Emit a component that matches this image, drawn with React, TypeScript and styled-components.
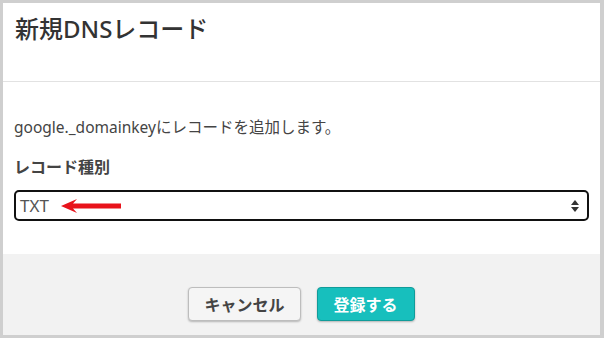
import React from "react"
import styled, { createGlobalStyle } from "styled-components"

const GlobalStyle = createGlobalStyle`
    html, body {
        margin: 0;
        padding: 0;
        background: #cfcfcf;
    }
    body {
        font-family: "Noto Sans", "Noto Sans CJK JP", sans-serif;
    }
`

const Frame = styled.div`
    width: 604px;
    height: 338px;
    box-sizing: border-box;
    border-style: solid;
    border-color: #cfcfcf;
    border-width: 3px 4px 3px 3px;
    background: #ffffff;
    display: flex;
    flex-direction: column;
`

const Header = styled.div`
    height: 79px;
    padding: 10px 12px 0;
    box-sizing: border-box;
    border-bottom: 1px solid #e2e2e2;
`

const Title = styled.h1`
    margin: 0;
    font-size: 24px;
    font-weight: 500;
    line-height: 32px;
    color: #333;
`

const Body = styled.div`
    padding: 34px 11px 0;
    height: 172px;
    box-sizing: border-box;
`

const Lead = styled.p`
    margin: 0;
    font-size: 15.5px;
    line-height: 22px;
    color: #444;
`

const Label = styled.label`
    display: block;
    margin-top: 18px;
    font-size: 16px;
    font-weight: 700;
    line-height: 22px;
    color: #444;
`

const SelectBox = styled.div`
    margin-top: 12px;
    height: 31px;
    box-sizing: border-box;
    border: 2px solid #111;
    border-radius: 5px;
    display: flex;
    align-items: center;
    padding: 0 8px 0 4px;
    gap: 12px;
`

const SelectValue = styled.span`
    font-size: 17px;
    color: #555;
`

const Arrow = styled.svg`
    width: 60px;
    height: 14px;
`

const Spinner = styled.svg`
    margin-left: auto;
    width: 8px;
    height: 12px;
`

const Footer = styled.div`
    flex: 1;
    background: #f2f2f2;
    display: flex;
    justify-content: center;
    align-items: flex-start;
    padding-top: 33px;
    gap: 16px;
`

const Button = styled.button<{ $primary?: boolean }>`
    height: 34px;
    padding: 0 ${p => (p.$primary ? "16px" : "15px")};
    border-radius: 4px;
    font-family: "Noto Sans", "Noto Sans CJK JP", sans-serif;
    font-size: 16px;
    font-weight: 700;
    cursor: pointer;
    color: ${p => (p.$primary ? "#ffffff" : "#444")};
    background: ${p => (p.$primary ? "#17bfbd" : "#f5f5f5")};
    border: 1px solid ${p => (p.$primary ? "#119c9a" : "#bdbdbd")};
    box-shadow: 0 1px 2px rgba(0, 0, 0, 0.25);
`

const App: React.FC = () => {
    return (
        <>
            <GlobalStyle />
            <Frame>
                <Header>
                    <Title>新規DNSレコード</Title>
                </Header>
                <Body>
                    <Lead>google._domainkeyにレコードを追加します。</Lead>
                    <Label>レコード種別</Label>
                    <SelectBox>
                        <SelectValue>TXT</SelectValue>
                        <Arrow viewBox="0 0 60 14">
                            <polygon points="0,7 16,0 12,4.5 60,4.5 60,9.5 12,9.5 16,14" fill="#e8131b" />
                        </Arrow>
                        <Spinner viewBox="0 0 8 12">
                            <polygon points="4,0 8,5 0,5" fill="#333" />
                            <polygon points="0,7 8,7 4,12" fill="#333" />
                        </Spinner>
                    </SelectBox>
                </Body>
                <Footer>
                    <Button>キャンセル</Button>
                    <Button $primary>登録する</Button>
                </Footer>
            </Frame>
        </>
    )
}

export default App
